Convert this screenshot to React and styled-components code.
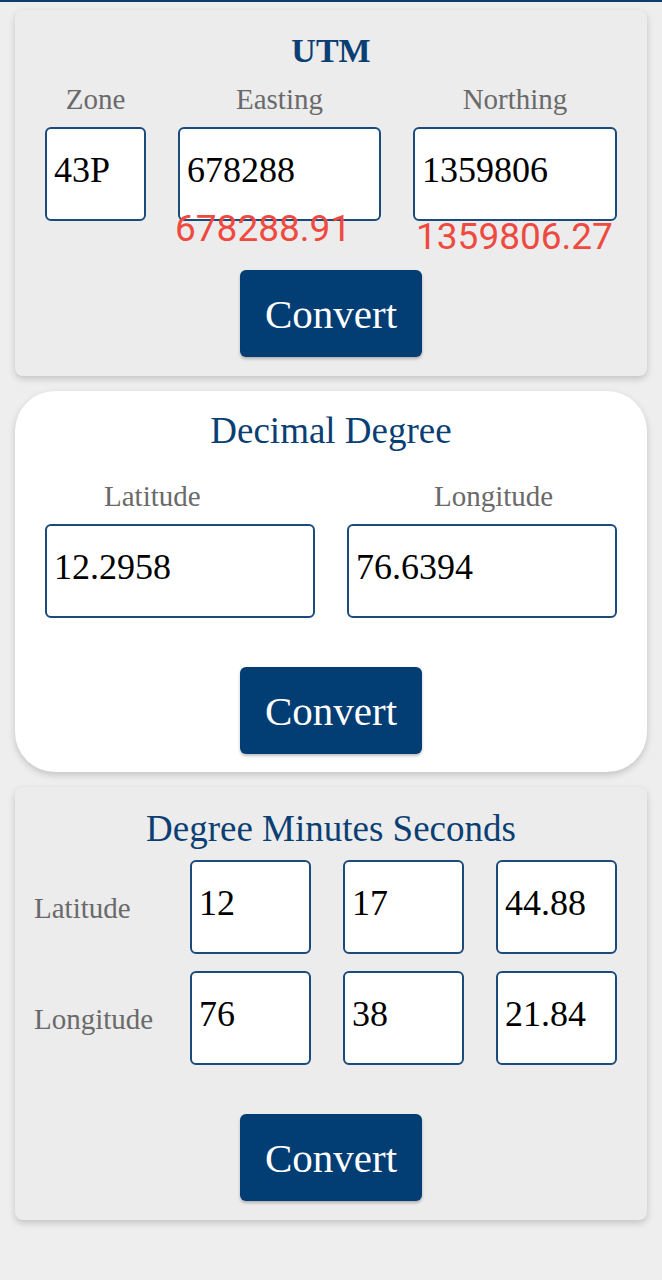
import React from "react";
import styled, { createGlobalStyle } from "styled-components";

const GlobalStyle = createGlobalStyle`
  body {
    margin: 0;
    background: #eeeeee;
    font-family: "Liberation Serif", "DejaVu Serif", serif;
  }
`;

const TopLine = styled.div`
  height: 2px;
  background: #0d3c6e;
`;

const Page = styled.div`
  display: flex;
  flex-direction: column;
  gap: 15px;
  padding: 8px 15px 40px;
`;

const Card = styled.section`
  background: ${(props) => (props.white ? "#ffffff" : "#ececec")};
  border-radius: ${(props) => props.radius || 8}px;
  padding: ${(props) => props.pad};
  box-shadow: 0 3px 7px rgba(0, 0, 0, 0.18);
  display: flex;
  flex-direction: column;
`;

const Title = styled.h2`
  margin: 0;
  text-align: center;
  color: #0b3f73;
  font-size: ${(props) => props.size}px;
  font-weight: ${(props) => (props.bold ? 700 : 400)};
  line-height: ${(props) => props.lh}px;
`;

const FieldRow = styled.div`
  display: flex;
  gap: 32px;
  margin-top: ${(props) => props.top || 0}px;
`;

const Column = styled.div`
  display: flex;
  flex-direction: column;
  width: ${(props) => props.w}px;
  flex: 0 0 auto;
`;

const Label = styled.div`
  font-size: 29px;
  line-height: 34px;
  color: #6a6a6a;
  margin-bottom: 11px;
  text-align: ${(props) => (props.indent !== undefined ? "left" : "center")};
  padding-left: ${(props) => props.indent || 0}px;
  white-space: nowrap;
`;

const Field = styled.input`
  box-sizing: border-box;
  width: 100%;
  height: 94px;
  border: 2px solid #1b4b7b;
  border-radius: 6px;
  background: #ffffff;
  padding: 0 6px 8px 7px;
  font-family: "Liberation Serif", "DejaVu Serif", serif;
  font-size: 36px;
  color: #000;
  outline: none;
  margin: 0;
`;

const Result = styled.div`
  font-family: Roboto, "Liberation Sans", sans-serif;
  font-size: 37px;
  line-height: 38px;
  color: #ef4a3f;
  white-space: nowrap;
  margin-top: ${(props) => props.top}px;
  margin-left: ${(props) => props.left}px;
`;

const ButtonWrap = styled.div`
  display: flex;
  justify-content: center;
  margin-top: ${(props) => props.top}px;
`;

const ConvertButton = styled.button`
  width: 182px;
  height: 87px;
  border: none;
  border-radius: 6px;
  background: #023d74;
  color: #ffffff;
  font-family: "Liberation Serif", "DejaVu Serif", serif;
  font-size: 41px;
  padding: 0;
  box-shadow: 0 2px 3px rgba(0, 0, 0, 0.25);
`;

const DmsRow = styled.div`
  display: flex;
  align-items: center;
  margin-left: -11px;
  margin-top: ${(props) => props.top}px;
`;

const DmsLabel = styled.div`
  flex: 0 0 156px;
  font-size: 29px;
  color: #6a6a6a;
  padding-top: 2px;
`;

const DmsInputs = styled.div`
  flex: 1;
  display: grid;
  grid-template-columns: repeat(3, 1fr);
  gap: 32px;
`;

export default function App() {
  return (
    <>
      <GlobalStyle />
      <TopLine />
      <Page>
        <Card pad="21px 30px 19px">
          <Title size={34} lh={40} bold>
            UTM
          </Title>
          <FieldRow top={11}>
            <Column w={101}>
              <Label>Zone</Label>
              <Field defaultValue="43P" />
            </Column>
            <Column w={203}>
              <Label>Easting</Label>
              <Field defaultValue="678288" />
              <Result top={-11} left={-3}>
                678288.91
              </Result>
            </Column>
            <Column w={204}>
              <Label>Northing</Label>
              <Field defaultValue="1359806" />
              <Result top={-3} left={3}>
                1359806.27
              </Result>
            </Column>
          </FieldRow>
          <ButtonWrap top={14}>
            <ConvertButton>Convert</ConvertButton>
          </ButtonWrap>
        </Card>

        <Card white radius={40} pad="19px 30px 18px">
          <Title size={37} lh={42}>
            Decimal Degree
          </Title>
          <FieldRow top={27}>
            <Column w={270}>
              <Label indent={59}>Latitude</Label>
              <Field defaultValue="12.2958" />
            </Column>
            <Column w={270}>
              <Label indent={87}>Longitude</Label>
              <Field defaultValue="76.6394" />
            </Column>
          </FieldRow>
          <ButtonWrap top={49}>
            <ConvertButton>Convert</ConvertButton>
          </ButtonWrap>
        </Card>

        <Card pad="21px 30px 19px">
          <Title size={37} lh={42}>
            Degree Minutes Seconds
          </Title>
          <DmsRow top={10}>
            <DmsLabel>Latitude</DmsLabel>
            <DmsInputs>
              <Field defaultValue="12" />
              <Field defaultValue="17" />
              <Field defaultValue="44.88" />
            </DmsInputs>
          </DmsRow>
          <DmsRow top={17}>
            <DmsLabel>Longitude</DmsLabel>
            <DmsInputs>
              <Field defaultValue="76" />
              <Field defaultValue="38" />
              <Field defaultValue="21.84" />
            </DmsInputs>
          </DmsRow>
          <ButtonWrap top={49}>
            <ConvertButton>Convert</ConvertButton>
          </ButtonWrap>
        </Card>
      </Page>
    </>
  );
}
